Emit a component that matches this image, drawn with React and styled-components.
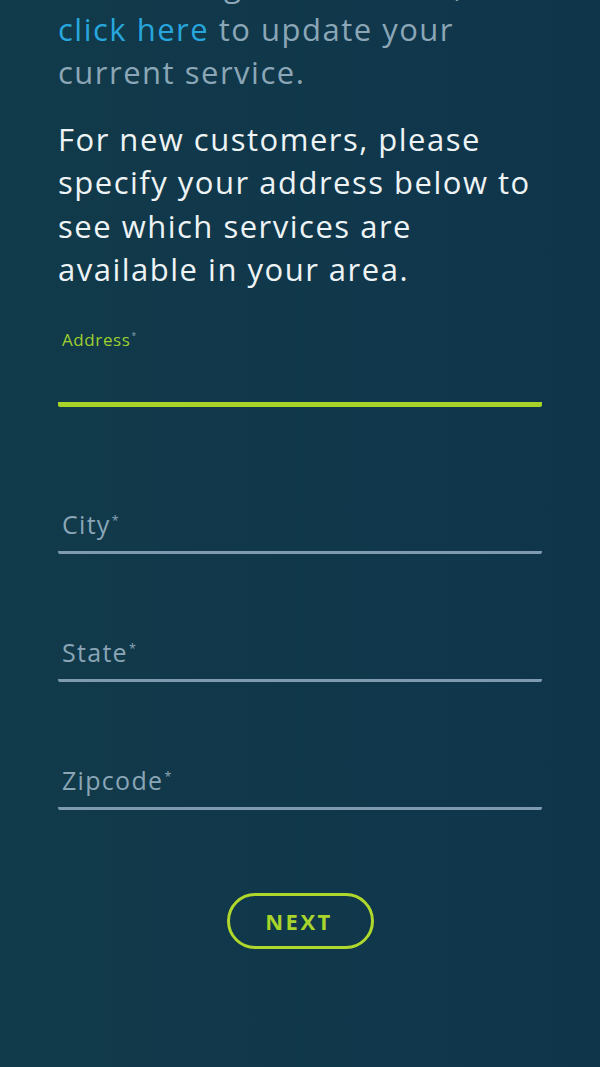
import React from "react";
import styled, { createGlobalStyle } from "styled-components";

const GlobalStyle = createGlobalStyle`
  html, body {
    margin: 0;
    padding: 0;
    background: #10374a;
  }
  body {
    font-family: "Open Sans", "Liberation Sans", sans-serif;
  }
`;

const Page = styled.div`
  min-height: 100vh;
  box-sizing: border-box;
  overflow: hidden;
  padding: 0 58px;
  background: linear-gradient(90deg, #113a4a 0%, #0f354b 100%);
`;

const Intro = styled.p`
  margin: -36px 0 0;
  font-size: 31px;
  line-height: 43.5px;
  letter-spacing: 1.5px;
  color: #8ba6b6;
`;

const Text = styled.p`
  margin: 23px 0 0;
  font-size: 31px;
  line-height: 43.5px;
  letter-spacing: 1.5px;
  color: #eef3f5;
`;

const Link = styled.a`
  color: #27a6dd;
  text-decoration: none;
`;

const Fields = styled.div`
  display: flex;
  flex-direction: column;
  gap: 50px;
  margin-top: 34px;
`;

const Field = styled.div`
  height: ${(p) => (p.$active ? "76px" : "75px")};
  display: flex;
  flex-direction: column;
  justify-content: ${(p) => (p.$active ? "flex-start" : "flex-end")};
  border-bottom: ${(p) => (p.$active ? "5px solid #a8d42a" : "3px solid #7d9aae")};
  border-radius: 2px;
  margin-bottom: ${(p) => (p.$active ? "19px" : "0")};
`;

const Label = styled.label`
  padding-left: 4px;
  padding-bottom: ${(p) => (p.$active ? "0" : "11px")};
  font-size: ${(p) => (p.$active ? "17px" : "25px")};
  line-height: ${(p) => (p.$active ? "20px" : "30px")};
  letter-spacing: ${(p) => (p.$active ? "0.6px" : "1.3px")};
  color: ${(p) => (p.$active ? "#9fcf2f" : "#8aa5b6")};
`;

const Star = styled.sup`
  font-size: 0.5em;
  margin-left: 1px;
  color: #8aa5b6;
`;

const Actions = styled.div`
  display: flex;
  justify-content: center;
  margin-top: 83px;
`;

const NextButton = styled.button`
  width: 147px;
  height: 56px;
  border: 3px solid #b0d82c;
  border-radius: 28px;
  background: transparent;
  color: #a9d42b;
  font-family: "Open Sans", "Liberation Sans", sans-serif;
  font-weight: 700;
  font-size: 22px;
  letter-spacing: 2.5px;
  padding-left: 4px;
  cursor: pointer;
`;

const fields = [
  { name: "Address", active: true },
  { name: "City" },
  { name: "State" },
  { name: "Zipcode" },
];

export default function App() {
  return (
    <>
      <GlobalStyle />
      <Page>
        <Intro>
          For existing home clients,
          <br />
          <Link href="#">click here</Link> to update your
          <br />
          current service.
        </Intro>
        <Text>
          For new customers, please
          <br />
          specify your address below to
          <br />
          see which services are
          <br />
          available in your area.
        </Text>
        <Fields>
          {fields.map((f) => (
            <Field key={f.name} $active={f.active}>
              <Label $active={f.active}>
                {f.name}
                <Star>*</Star>
              </Label>
            </Field>
          ))}
        </Fields>
        <Actions>
          <NextButton>NEXT</NextButton>
        </Actions>
      </Page>
    </>
  );
}
